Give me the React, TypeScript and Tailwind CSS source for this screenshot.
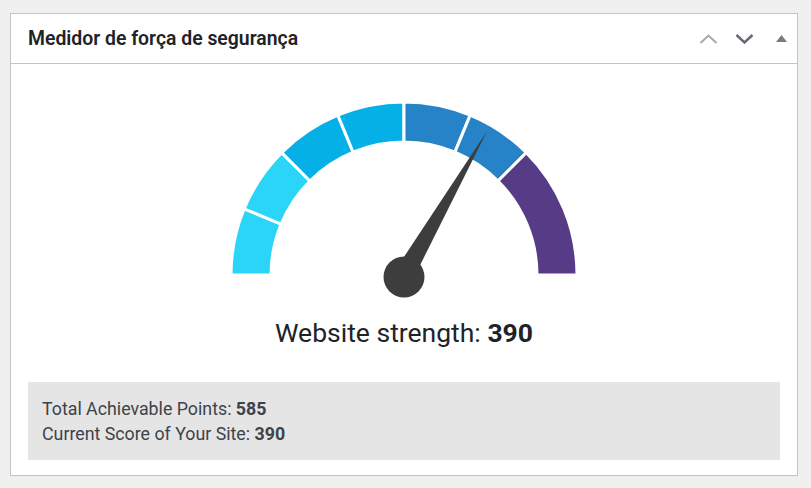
import React from 'react';

const CX = 180;
const CY = 175;
const R_OUT = 173;
const R_IN = 133;

const segments = [
  { from: 180, to: 157.5, color: '#2ad5f7' },
  { from: 157.5, to: 135, color: '#2ad5f7' },
  { from: 135, to: 112.5, color: '#04b0e6' },
  { from: 112.5, to: 90, color: '#04b0e6' },
  { from: 90, to: 67.5, color: '#2683c8' },
  { from: 67.5, to: 45, color: '#2683c8' },
  { from: 45, to: 0, color: '#563c86' },
];

const pt = (r: number, deg: number) => {
  const a = (deg * Math.PI) / 180;
  return [CX + r * Math.cos(a), CY - r * Math.sin(a)];
};

const arcPath = (from: number, to: number) => {
  const [x1, y1] = pt(R_OUT, from);
  const [x2, y2] = pt(R_OUT, to);
  const [x3, y3] = pt(R_IN, to);
  const [x4, y4] = pt(R_IN, from);
  return `M${x1} ${y1} A${R_OUT} ${R_OUT} 0 0 1 ${x2} ${y2} L${x3} ${y3} A${R_IN} ${R_IN} 0 0 0 ${x4} ${y4} Z`;
};

const Gauge = ({ score, total }: { score: number; total: number }) => {
  const angle = 180 * (1 - score / total);
  const [tx, ty] = pt(166, angle);
  const [b1x, b1y] = pt(10, angle + 90);
  const [b2x, b2y] = pt(10, angle - 90);
  return (
    <svg width="360" height="200" viewBox="0 0 360 200">
      {segments.map((s, i) => (
        <path key={i} d={arcPath(s.from, s.to)} fill={s.color} stroke="#ffffff" strokeWidth="3" />
      ))}
      <polygon points={`${b1x},${b1y} ${tx},${ty} ${b2x},${b2y}`} fill="#3d3d3d" />
      <circle cx={CX} cy={CY + 2} r="20.5" fill="#3d3d3d" />
    </svg>
  );
};

export default function App() {
  const score = 390;
  const total = 585;

  return (
    <div className="w-[811px] h-[488px] bg-[#f0f0f1] pt-[13px] pl-[10px] font-['Roboto','Liberation_Sans',sans-serif]">
      <div className="w-[788px] h-[463px] bg-white border border-[#c3c4c7] flex flex-col">
        <div className="h-[50px] flex items-center justify-between border-b border-[#c3c4c7] pl-[17px] pr-[10px]">
          <h2 className="text-[19.4px] font-semibold text-[#1d2327] pt-[1px]">Medidor de força de segurança</h2>
          <div className="flex items-center gap-[17px]">
            <svg width="19" height="10" viewBox="0 0 19 10">
              <path d="M1.5 9 L9.5 1.5 L17.5 9" fill="none" stroke="#a7aaad" strokeWidth="2" />
            </svg>
            <svg width="19" height="10" viewBox="0 0 19 10">
              <path d="M1.5 1 L9.5 8.5 L17.5 1" fill="none" stroke="#646970" strokeWidth="2.4" />
            </svg>
            <svg width="11" height="8" viewBox="0 0 11 8" className="ml-[5px]">
              <path d="M0 7 L5.5 0 L11 7 Z" fill="#787c82" />
            </svg>
          </div>
        </div>
        <div className="flex flex-col items-center pt-[36px]">
          <Gauge score={score} total={total} />
          <p className="mt-[17px] text-[26.5px] text-[#1d2327] leading-[32px]">
            Website strength: <b className="font-bold">{score}</b>
          </p>
        </div>
        <div className="mx-[17px] mt-[33px] bg-[#e5e5e5] px-[14px] py-[14px] text-[17.8px] leading-[25px] text-[#3c434a]">
          <p>
            Total Achievable Points: <b className="font-bold">{total}</b>
          </p>
          <p>
            Current Score of Your Site: <b className="font-bold">{score}</b>
          </p>
        </div>
      </div>
    </div>
  );
}
